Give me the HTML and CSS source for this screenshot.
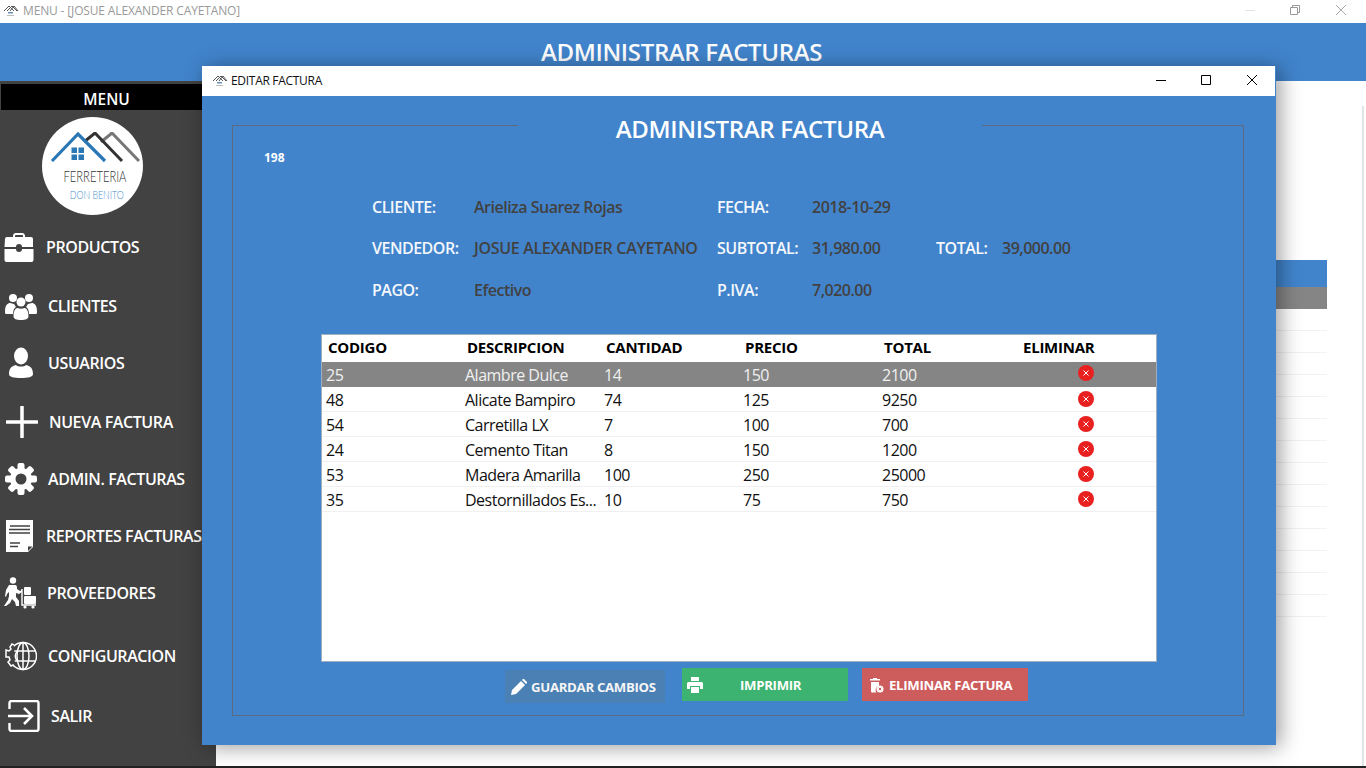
FILE: index.html
```html
<!DOCTYPE html>
<html lang="es">
<head>
<meta charset="utf-8">
<title>Editar factura</title>
<link rel="stylesheet" href="styles.css">
</head>
<body>
<div class="desktop">
  <div class="main-window">
    <div class="titlebar">
      <svg class="app-icon" viewBox="0 0 16 14"><path d="M1 7 6 2l5 5M4 7l5-5 5 5M7 7l4-5 4 5" fill="none" stroke="#555" stroke-width="1"/><rect x="5" y="8" width="5" height="1.5" fill="#6b8fb5"/><rect x="4" y="11" width="7" height="1" fill="#bbb"/></svg>
      <span class="titlebar-text">MENU - [JOSUE ALEXANDER CAYETANO]</span>
      <div class="win-controls">
        <svg class="ctl ctl-min" viewBox="0 0 10 10"><path d="M0 5.500h10" stroke="#e2e2e2"/></svg>
        <svg class="ctl ctl-restore" viewBox="0 0 10 10"><path d="M.5 2.5h7v7h-7zM2.5 2.500v-2h7v7h-2" fill="none" stroke="#999"/></svg>
        <svg class="ctl ctl-close" viewBox="0 0 10 10"><path d="M0 0l10 10M10 0 0 10" stroke="#aaa"/></svg>
      </div>
    </div>
    <header class="app-header"><h1>ADMINISTRAR FACTURAS</h1></header>
    <div class="app-body">
      <aside class="sidebar">
        <div class="menu-title">MENU</div>
        <div class="logo">
          <svg class="logo-art" viewBox="0 0 100 36"><path d="M58 10 69 1l27 28" fill="none" stroke="#777" stroke-width="3"/><path d="M41 10 52 1l27 28" fill="none" stroke="#333" stroke-width="3"/><path d="M9 29 35 2l27 27" fill="none" stroke="#2a77b5" stroke-width="3.200"/><path d="M30 17h5.500v5.500H30zM37 17h5.500v5.500H37zM30 24h5.500v5.500H30zM37 24h5.500v5.500H37z" fill="#2a77b5" transform="translate(-1.500 -1.500)"/></svg>
          <div class="logo-name">FERRETERIA</div>
          <div class="logo-sub">DON BENITO</div>
        </div>
        <nav class="nav">
          <a class="nav-item"><svg class="nav-icon" viewBox="0 0 32 32"><path d="M11 8V4.500A2 2 0 0 1 13 3h6a2 2 0 0 1 2 1.500V8" fill="none" stroke="#fff" stroke-width="2"/><path d="M2 8a2 2 0 0 1 2-2h24a2 2 0 0 1 2 2v8H19a3 3 0 0 0-6 0H1.500zM1.500 18H13a3 3 0 0 0 6 0h11.500v11a2 2 0 0 1-2 2h-25a2 2 0 0 1-2-2z" fill="#fff"/></svg><span>PRODUCTOS</span></a>
          <a class="nav-item"><svg class="nav-icon" viewBox="0 0 32 32"><circle cx="8" cy="8" r="4" fill="#fff"/><circle cx="24" cy="8" r="4" fill="#fff"/><circle cx="16" cy="12" r="4.500" fill="#fff"/><path d="M0 21c0-6 3-8 5-8l4 1c1 1 1 2 2 3-2 1-3 4-3 7H1c-1 0-1-1-1-3zM32 21c0-6-3-8-5-8l-4 1c-1 1-1 2-2 3 2 1 3 4 3 7h7c1 0 1-1 1-3z" fill="#fff"/><path d="M8.500 26c0-5 2-8 4-8 2 1 5 1 7 0 2 0 4 3 4 8 0 3-3 4-7.500 4S8.500 29 8.500 26z" fill="#fff"/></svg><span>CLIENTES</span></a>
          <a class="nav-item"><svg class="nav-icon" viewBox="0 0 32 32"><ellipse cx="16" cy="9" rx="7" ry="8.500" fill="#fff"/><path d="M4 27c0-5 2-8 7-9 2 2 8 2 10 0 5 1 7 4 7 9 0 3-5 4-12 4S4 30 4 27z" fill="#fff"/></svg><span>USUARIOS</span></a>
          <a class="nav-item"><svg class="nav-icon" viewBox="0 0 32 32"><path d="M16 1v30M1 16h30" stroke="#fff" stroke-width="3.500" stroke-linecap="round"/></svg><span>NUEVA FACTURA</span></a>
          <a class="nav-item"><svg class="nav-icon" viewBox="0 0 32 32"><g fill="#fff"><rect x="12.500" y="0" width="7" height="32" rx="2"/><rect x="12.500" y="0" width="7" height="32" rx="2" transform="rotate(45 16 16)"/><rect x="12.500" y="0" width="7" height="32" rx="2" transform="rotate(90 16 16)"/><rect x="12.500" y="0" width="7" height="32" rx="2" transform="rotate(135 16 16)"/></g><circle cx="16" cy="16" r="8.500" fill="none" stroke="#fff" stroke-width="5"/><circle cx="16" cy="16" r="5.500" fill="#424242"/></svg><span>ADMIN. FACTURAS</span></a>
          <a class="nav-item"><svg class="nav-icon" viewBox="0 0 32 32"><path d="M3 0h27v27l-5 5H3z" fill="#fff"/><path d="M7 6h20M6 9.500h21M6 13h21M7 23h10M7 26.500h8" stroke="#424242" stroke-width="1.700"/><path d="M25 31v-4.500h4.500z" fill="#424242"/></svg><span>REPORTES FACTURAS</span></a>
          <a class="nav-item"><svg class="nav-icon" viewBox="0 0 32 32"><circle cx="9" cy="3.500" r="3.200" fill="#fff"/><path d="M5 8h6c2 0 2 2 2 4l3 2 2-1v2l-3 2-3-1v4l3 4v5h-3l-1-4-3-3-2 4-4 3H0l4-6 1-4v-4l-2 2-1 3-1-1 1-6z" fill="#fff"/><rect x="20" y="10" width="7" height="8" rx="1" fill="#fff"/><rect x="20" y="19" width="12" height="8" rx="1" fill="#fff"/><path d="M18 12v16h14" fill="none" stroke="#fff" stroke-width="1.400"/><circle cx="21" cy="30" r="1.600" fill="#fff"/><circle cx="29" cy="30" r="1.600" fill="#fff"/></svg><span>PROVEEDORES</span></a>
          <a class="nav-item"><svg class="nav-icon" viewBox="0 0 32 32"><g fill="none" stroke="#fff" stroke-width="1.500"><circle cx="18" cy="16" r="13.500"/><ellipse cx="18" cy="16" rx="6" ry="13.500"/><path d="M18 2.500v27M5 11h26M5 21h26"/><path d="M9 5 7 4 5 7l1 2-2 2-3-1v7l3 0 1 3-2 2 3 4 2-1 2 2" fill="#424242"/><path d="M13 11a6 6 0 0 0 0 10" /></g></svg><span>CONFIGURACION</span></a>
          <a class="nav-item"><svg class="nav-icon" viewBox="0 0 32 32"><path d="M1.500 9V3a2 2 0 0 1 2-2h25a2 2 0 0 1 2 2v26a2 2 0 0 1-2 2h-25a2 2 0 0 1-2-2v-6" fill="none" stroke="#fff" stroke-width="2.400"/><path d="M0 16h22M16 8l8 8-8 8" fill="none" stroke="#fff" stroke-width="2.600"/></svg><span>SALIR</span></a>
        </nav>
      </aside>
      <main class="content">
        <div class="bg-table">
          <div class="bg-head"></div>
          <div class="bg-selected"></div>
          <div class="bg-row"></div><div class="bg-row"></div><div class="bg-row"></div><div class="bg-row"></div><div class="bg-row"></div><div class="bg-row"></div><div class="bg-row"></div><div class="bg-row"></div><div class="bg-row"></div><div class="bg-row"></div><div class="bg-row"></div><div class="bg-row"></div><div class="bg-row"></div><div class="bg-row"></div>
        </div>
        <div class="scrollbar"></div>
      </main>
    </div>
    <div class="taskbar"></div>
  </div>

  <section class="dialog">
    <div class="dialog-bar">
      <svg class="app-icon" viewBox="0 0 16 14"><path d="M1 7 6 2l5 5M4 7l5-5 5 5M7 7l4-5 4 5" fill="none" stroke="#555" stroke-width="1"/><rect x="5" y="8" width="5" height="1.500" fill="#6b8fb5"/><rect x="4" y="11" width="7" height="1" fill="#bbb"/></svg>
      <span class="dialog-title">EDITAR FACTURA</span>
      <div class="dialog-controls">
        <svg class="dctl dctl-min" viewBox="0 0 10 10"><path d="M0 5.500h10" stroke="#000"/></svg>
        <svg class="dctl dctl-max" viewBox="0 0 10 10"><path d="M.5.500h9v9h-9z" fill="none" stroke="#000"/></svg>
        <svg class="dctl dctl-close" viewBox="0 0 10 10"><path d="M0 0l10 10M10 0 0 10" stroke="#000"/></svg>
      </div>
    </div>
    <div class="dialog-body">
      <div class="frame">
        <h2 class="frame-title">ADMINISTRAR FACTURA</h2>
        <div class="invoice-id">198</div>
        <div class="invoice-form">
          <span class="lbl">CLIENTE:</span><span class="val">Arieliza Suarez Rojas</span>
          <span class="lbl">FECHA:</span><span class="val">2018-10-29</span><span></span><span></span>
          <span class="lbl">VENDEDOR:</span><span class="val val-name">JOSUE ALEXANDER CAYETANO</span>
          <span class="lbl">SUBTOTAL:</span><span class="val">31,980.00</span>
          <span class="lbl">TOTAL:</span><span class="val">39,000.00</span>
          <span class="lbl">PAGO:</span><span class="val">Efectivo</span>
          <span class="lbl">P.IVA:</span><span class="val">7,020.00</span><span></span><span></span>
        </div>
        <div class="table-box">
          <table class="items">
            <thead><tr><th>CODIGO</th><th>DESCRIPCION</th><th>CANTIDAD</th><th>PRECIO</th><th>TOTAL</th><th>ELIMINAR</th></tr></thead>
            <tbody>
              <tr class="selected"><td>25</td><td>Alambre Dulce</td><td>14</td><td>150</td><td>2100</td><td class="del"><svg class="x-icon" viewBox="0 0 16 16"><circle cx="8" cy="8" r="8" fill="#e82020"/><path d="M5.500 5.500l5 5M10.500 5.500l-5 5" stroke="#fff"/></svg></td></tr>
              <tr><td>48</td><td>Alicate Bampiro</td><td>74</td><td>125</td><td>9250</td><td class="del"><svg class="x-icon" viewBox="0 0 16 16"><circle cx="8" cy="8" r="8" fill="#e82020"/><path d="M5.500 5.500l5 5M10.500 5.500l-5 5" stroke="#fff"/></svg></td></tr>
              <tr><td>54</td><td>Carretilla LX</td><td>7</td><td>100</td><td>700</td><td class="del"><svg class="x-icon" viewBox="0 0 16 16"><circle cx="8" cy="8" r="8" fill="#e82020"/><path d="M5.500 5.500l5 5M10.500 5.500l-5 5" stroke="#fff"/></svg></td></tr>
              <tr><td>24</td><td>Cemento Titan</td><td>8</td><td>150</td><td>1200</td><td class="del"><svg class="x-icon" viewBox="0 0 16 16"><circle cx="8" cy="8" r="8" fill="#e82020"/><path d="M5.500 5.500l5 5M10.500 5.500l-5 5" stroke="#fff"/></svg></td></tr>
              <tr><td>53</td><td>Madera Amarilla</td><td>100</td><td>250</td><td>25000</td><td class="del"><svg class="x-icon" viewBox="0 0 16 16"><circle cx="8" cy="8" r="8" fill="#e82020"/><path d="M5.500 5.500l5 5M10.500 5.500l-5 5" stroke="#fff"/></svg></td></tr>
              <tr><td>35</td><td>Destornillados Es...</td><td>10</td><td>75</td><td>750</td><td class="del"><svg class="x-icon" viewBox="0 0 16 16"><circle cx="8" cy="8" r="8" fill="#e82020"/><path d="M5.500 5.500l5 5M10.500 5.500l-5 5" stroke="#fff"/></svg></td></tr>
            </tbody>
          </table>
        </div>
        <div class="actions">
          <button class="btn btn-save"><svg class="btn-icon" viewBox="0 0 16 16"><path d="M0 16l1-5L10 2l4 4-9 9zM11 1l1-1a1 1 0 0 1 1 0l3 3a1 1 0 0 1 0 1l-1 1z" fill="#fff"/></svg><span>GUARDAR CAMBIOS</span></button>
          <button class="btn btn-print"><svg class="btn-icon" viewBox="0 0 16 16"><path d="M4 0h8v4H4zM1.500 5h13A1.500 1.500 0 0 1 16 6.500V12h-3V9H3v3H0V6.500A1.500 1.500 0 0 1 1.500 5zM4 10h8v6H4z" fill="#fff"/></svg><span>IMPRIMIR</span></button>
          <button class="btn btn-delete"><svg class="btn-icon" viewBox="0 0 16 16"><path d="M5 1h4v1h3v1.500H2V2h3zM3 5h8v4a4 4 0 0 0-2.500 6.500H4a1 1 0 0 1-1-1z" fill="#fff"/><circle cx="12" cy="12" r="3.500" fill="#fff"/><path d="M10.700 10.700l2.600 2.600M13.300 10.700l-2.600 2.600" stroke="#cd5c5c"/></svg><span>ELIMINAR FACTURA</span></button>
        </div>
      </div>
    </div>
  </section>
</div>
</body>
</html>
```
FILE: styles.css
```css
* { box-sizing: border-box; }
html, body { margin: 0; padding: 0; height: 100%; overflow: hidden; }
body { font-family: "Open Sans", "Noto Sans", sans-serif; background: #fff; }
.desktop { position: relative; width: 1366px; height: 768px; overflow: hidden; }

.main-window { display: flex; flex-direction: column; height: 768px; }
.titlebar { height: 23px; flex: none; background: #fff; display: flex; align-items: center; padding: 0 0 2px 3px; color: #9a9a9a; }
.app-icon { width: 16px; height: 14px; flex: none; }
.titlebar-text { margin-left: 4px; font-size: 12px; letter-spacing: -.15px; }
.win-controls { margin-left: auto; display: flex; align-self: flex-start; margin-top: 5px; }
.ctl { width: 10px; height: 10px; display: block; }
.ctl-min { margin-right: 35px; }
.ctl-restore { margin-right: 36px; }
.ctl-close { margin-right: 20px; }

.app-header { height: 58px; flex: none; background: #4184cc; display: flex; justify-content: center; padding: 13px 3px 0 0; }
.app-header h1 { margin: 0; color: #fff; font-size: 24px; font-weight: 600; line-height: 32px; letter-spacing: -.35px; }

.app-body { flex: 1; display: flex; min-height: 0; }
.sidebar { width: 216px; flex: none; background: #424242; padding-top: 3px; position: relative; }
.menu-title { margin-left: 1px; width: 215px; height: 26px; background: #000; color: #fff; font-size: 15.500px; font-weight: 600; line-height: 31px; text-align: center; padding-right: 4px; }
.logo { width: 101px; height: 98px; margin: 7px 0 0 42px; border-radius: 50%; background: #fff; display: flex; flex-direction: column; align-items: center; padding-top: 15px; }
.logo-art { width: 100px; height: 36px; flex: none; display: block; }
.logo-name { font-family: "Lato", sans-serif; font-weight: 300; color: #333; font-size: 16px; line-height: 18px; margin: -1px 0 0 5px; transform: scaleX(.7); }
.logo-sub { font-family: "Lato", sans-serif; font-weight: 300; color: #3f8ccb; font-size: 11px; line-height: 12px; margin: 4px 0 0 8px; transform: scaleX(.8); }

.nav { display: flex; flex-direction: column; }
.nav-item { display: flex; align-items: center; height: 40px; color: #fff; font-size: 16px; font-weight: 600; letter-spacing: -.4px; white-space: nowrap; }
.nav-icon { width: 32px; height: 32px; flex: none; display: block; }
.nav-item:nth-child(1) { margin-top: 12px; padding-left: 3px; }
.nav-item:nth-child(1) span { margin-left: 11px; }
.nav-item:nth-child(2) { margin-top: 19px; padding-left: 5px; }
.nav-item:nth-child(2) span { margin-left: 11px; }
.nav-item:nth-child(3) { margin-top: 17px; padding-left: 5px; }
.nav-item:nth-child(3) span { margin-left: 11px; }
.nav-item:nth-child(4) { margin-top: 19px; padding-left: 6px; }
.nav-item:nth-child(4) span { margin-left: 11px; }
.nav-item:nth-child(5) { margin-top: 17px; padding-left: 5px; }
.nav-item:nth-child(5) span { margin-left: 11px; }
.nav-item:nth-child(6) { margin-top: 17px; padding-left: 3px; }
.nav-item:nth-child(6) span { margin-left: 11px; }
.nav-item:nth-child(7) { margin-top: 17px; padding-left: 4px; }
.nav-item:nth-child(7) span { margin-left: 11px; }
.nav-item:nth-child(8) { margin-top: 23px; padding-left: 5px; }
.nav-item:nth-child(8) span { margin-left: 11px; }
.nav-item:nth-child(9) { margin-top: 20px; padding-left: 8px; }
.nav-item:nth-child(9) span { margin-left: 11px; }

.content { flex: 1; background: #fff; position: relative; padding-top: 179px; }
.bg-table { width: 1111px; }
.bg-head { height: 27px; background: #4184cc; }
.bg-selected { height: 22px; background: #858585; }
.bg-row { height: 22px; border-bottom: 1px solid #f2f2f2; }
.scrollbar { position: absolute; top: 25px; right: 2px; bottom: 0; width: 2px; background: #e3e3e3; }
.taskbar { height: 2px; flex: none; background: #222; }

.dialog { position: absolute; left: 202px; top: 66px; width: 1074px; height: 679px; background: #4184cc; box-shadow: 4px 2px 20px rgba(0,0,0,.4); display: flex; flex-direction: column; }
.dialog-bar { height: 30px; flex: none; background: #fff; display: flex; align-items: center; padding: 0 0 1px 10px; margin-right: 1px; }
.dialog-title { margin-left: 3px; font-size: 12px; color: #111; letter-spacing: -.3px; }
.dialog-controls { margin-left: auto; display: flex; align-self: flex-start; margin-top: 9px; margin-right: 18px; }
.dctl { width: 10px; height: 10px; display: block; }
.dctl-min { margin-right: 35px; }
.dctl-max { margin-right: 36px; }
.dialog-body { flex: 1; padding: 29px 32px 29px 30px; }
.frame { position: relative; height: 100%; border: 1px solid #5c6b80; display: flex; flex-direction: column; }
.frame-title { position: absolute; left: 285px; top: -17px; width: 464px; margin: 0; color: #fff; text-align: center; font-size: 24px; font-weight: 600; line-height: 40px; height: 32px; letter-spacing: -.35px; background: #4184cc; }
.invoice-id { margin: 24px 0 0 31px; color: #fff; font-size: 12px; font-weight: 700; line-height: 16px; }
.invoice-form { display: grid; grid-template-columns: 102px 243px 95px 124px 66px auto; grid-auto-rows: 41.500px; margin: 20px 0 0 139px; align-items: center; font-size: 16px; font-weight: 600; white-space: nowrap; }
.lbl { color: #f4f7fb; letter-spacing: -.5px; }
.val { color: #414141; letter-spacing: -.5px; }
.val-name { letter-spacing: -.32px; }
.table-box { margin: 23px 0 0 88px; width: 836px; height: 328px; background: #fff; border: 1px solid #a0aebd; flex: none; }
.items { width: 834px; border-collapse: collapse; table-layout: fixed; font-size: 16px; letter-spacing: -.5px; color: #111; }
.items th { height: 27px; padding: 0 0 2px 6px; text-align: left; color: #000; font-size: 15px; font-weight: 700; letter-spacing: -.25px; }
.items td { height: 25px; padding: 2px 0 0 4px; border-bottom: 1px solid #f0f0f0; white-space: nowrap; overflow: hidden; line-height: 22px; }
.items tr.selected td { background: #858585; color: #f0f0f0; border-bottom-color: #858585; }
.items td.del { padding: 0 2px 0 0; text-align: center; }
.x-icon { width: 16px; height: 16px; display: block; margin: 0 auto 1px; }
.actions { display: flex; align-items: flex-start; margin: 6px 0 0 272px; }
.btn { display: flex; align-items: center; height: 33px; border: 0; color: #fff; font-family: inherit; font-size: 13.200px; font-weight: 700; letter-spacing: -.3px; white-space: nowrap; }
.btn-icon { width: 16px; height: 16px; flex: none; display: block; }
.btn-save { width: 160px; margin: 2px 17px 0 0; background: #4a80b4; padding: 2px 0 0 6px; color: #f5f5f5; }
.btn-save span { margin-left: 4px; }
.btn-print { width: 166px; margin-right: 14px; background: #3cb371; padding: 2px 0 0 5px; }
.btn-print span { margin-left: 37px; }
.btn-delete { width: 166px; background: #cd5c5c; padding: 2px 0 0 6px; }
.btn-delete span { margin-left: 5px; }
```
